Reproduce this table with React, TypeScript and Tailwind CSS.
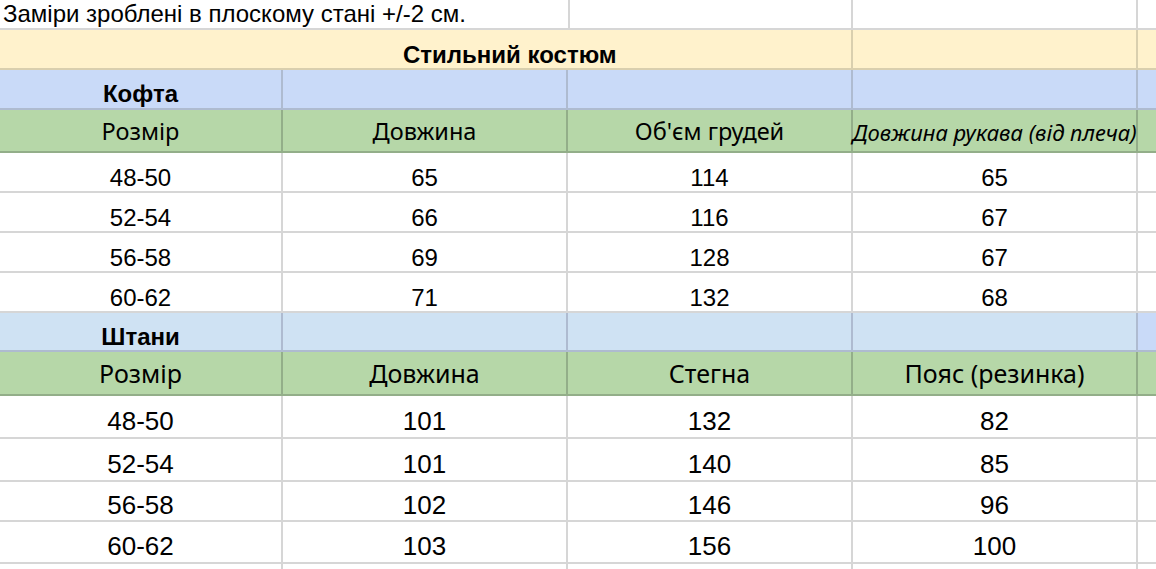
const COLS = "grid grid-cols-[283px_285px_285px_285px_1fr]";
const ARIAL = "font-['Liberation_Sans',Arial,sans-serif]";
const HAND = "font-['Noto_Sans',sans-serif]";

const KOFTA = [
  ["48-50", "65", "114", "65"],
  ["52-54", "66", "116", "67"],
  ["56-58", "69", "128", "67"],
  ["60-62", "71", "132", "68"],
];

const SHTANY = [
  ["48-50", "101", "132", "82"],
  ["52-54", "101", "140", "85"],
  ["56-58", "102", "146", "96"],
  ["60-62", "103", "156", "100"],
];

const TOP_HEIGHTS = ["h-[40px]", "h-[40px]", "h-[40px]", "h-[40px]"];
const BOTTOM_HEIGHTS = ["h-[43px]", "h-[43px]", "h-[40px]", "h-[42px]"];

function DataRows({ rows, heights, cell }: { rows: string[][]; heights: string[]; cell: string }) {
  return (
    <>
      {rows.map((r, i) => (
        <div key={i} className={`${COLS} ${heights[i]} bg-white`}>
          {r.map((v, j) => (
            <div
              key={j}
              className={`flex justify-center border-r-2 border-b-2 border-[#d6d6d6] leading-none text-black ${cell} ${ARIAL}`}
            >
              {v}
            </div>
          ))}
          <div className="border-b-2 border-[#d6d6d6]" />
        </div>
      ))}
    </>
  );
}

function SectionRow({ title, bg, tail, height, pad }: { title: string; bg: string; tail: string; height: string; pad: string }) {
  return (
    <div className={`${COLS} ${height}`}>
      <div className={`flex items-end justify-center border-r-2 border-b-2 border-[#aebbd0] ${bg} ${pad} text-[24px] font-bold leading-none text-black ${ARIAL}`}>
        {title}
      </div>
      <div className={`border-r-2 border-b-2 border-[#aebbd0] ${bg}`} />
      <div className={`border-r-2 border-b-2 border-[#aebbd0] ${bg}`} />
      <div className={`border-r-2 border-b-2 border-[#aebbd0] ${bg}`} />
      <div className={`border-b-2 border-[#aebbd0] ${tail}`} />
    </div>
  );
}

function HeadRow({ cells, height, size }: { cells: { text: string; italic?: boolean }[]; height: string; size: string }) {
  return (
    <div className={`${COLS} ${height} bg-[#b6d7a8]`}>
      {cells.map((c, i) => (
        <div
          key={i}
          className={`flex items-end justify-center whitespace-nowrap border-r-2 border-b-2 border-[#93ae89] pb-[8px] leading-none text-black ${HAND} ${
            c.italic ? "text-[22px] italic" : size
          }`}
        >
          {c.text}
        </div>
      ))}
      <div className="border-b-2 border-[#93ae89]" />
    </div>
  );
}

export default function App() {
  return (
    <div className="h-[569px] w-[1156px] overflow-hidden bg-white">
      {/* note row */}
      <div className={`${COLS} h-[30px]`}>
        <div className={`col-span-2 flex items-end whitespace-nowrap border-b-2 border-[#d6d6d6] pb-[2px] pl-[3px] text-[24px] leading-none text-black ${ARIAL}`}>
          Заміри зроблені в плоскому стані +/-2 см.
        </div>
        <div className="border-l-2 border-r-2 border-b-2 border-[#d6d6d6]" />
        <div className="border-r-2 border-b-2 border-[#d6d6d6]" />
        <div className="border-b-2 border-[#d6d6d6]" />
      </div>

      {/* title */}
      <div className={`${COLS} h-[40px] bg-[#fff2cc]`}>
        <div className={`col-span-3 flex items-end border-r-2 border-b-2 border-[#d9cfae] pb-[1px] pl-[403px] text-[24px] font-bold leading-none text-black ${ARIAL}`}>
          Стильний костюм
        </div>
        <div className="border-r-2 border-b-2 border-[#d9cfae]" />
        <div className="border-b-2 border-[#d9cfae]" />
      </div>

      <SectionRow title="Кофта" bg="bg-[#c9daf8]" tail="bg-[#c9daf8]" height="h-[40px]" pad="pb-[2px]" />
      <HeadRow
        height="h-[43px]"
        size="text-[23.5px]"
        cells={[
          { text: "Розмір" },
          { text: "Довжина" },
          { text: "Об'єм грудей" },
          { text: "Довжина рукава (від плеча)", italic: true },
        ]}
      />
      <DataRows rows={KOFTA} heights={TOP_HEIGHTS} cell="items-end pb-[1px] text-[24px]" />

      <SectionRow title="Штани" bg="bg-[#cfe2f3]" tail="bg-[#c9daf8]" height="h-[39px]" pad="pb-[1px]" />
      <HeadRow
        height="h-[44px]"
        size="text-[25px]"
        cells={[{ text: "Розмір" }, { text: "Довжина" }, { text: "Стегна" }, { text: "Пояс (резинка)" }]}
      />
      <DataRows rows={SHTANY} heights={BOTTOM_HEIGHTS} cell="items-center pt-[8px] text-[26px]" />

      <div className={`${COLS} h-[10px]`}>
        <div className="border-r-2 border-[#d6d6d6]" />
        <div className="border-r-2 border-[#d6d6d6]" />
        <div className="border-r-2 border-[#d6d6d6]" />
        <div className="border-r-2 border-[#d6d6d6]" />
        <div />
      </div>
    </div>
  );
}
